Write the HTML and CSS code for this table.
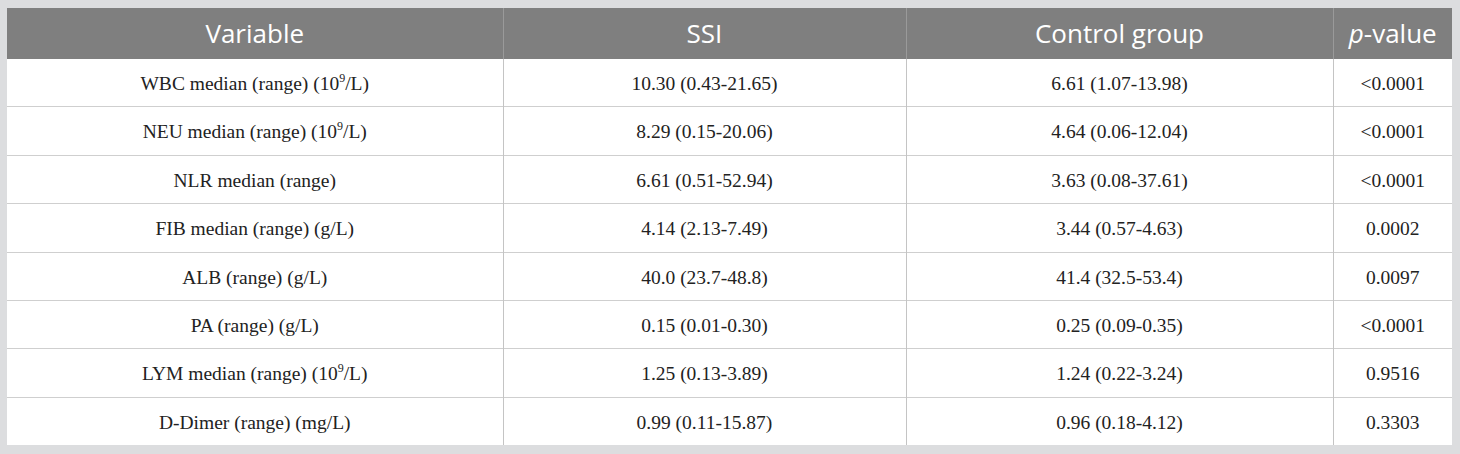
FILE: index.html
```html
<!DOCTYPE html>
<html>
<head>
<meta charset="utf-8">
<link rel="stylesheet" href="styles.css">
</head>
<body>
<table class="data">
  <colgroup>
    <col class="c1"><col class="c2"><col class="c3"><col class="c4">
  </colgroup>
  <thead>
    <tr><th>Variable</th><th>SSI</th><th>Control group</th><th><i>p</i>-value</th></tr>
  </thead>
  <tbody>
    <tr><td>WBC median (range) (10<sup>9</sup>/L)</td><td>10.30 (0.43-21.65)</td><td>6.61 (1.07-13.98)</td><td>&lt;0.0001</td></tr>
    <tr><td>NEU median (range) (10<sup>9</sup>/L)</td><td>8.29 (0.15-20.06)</td><td>4.64 (0.06-12.04)</td><td>&lt;0.0001</td></tr>
    <tr><td>NLR median (range)</td><td>6.61 (0.51-52.94)</td><td>3.63 (0.08-37.61)</td><td>&lt;0.0001</td></tr>
    <tr><td>FIB median (range) (g/L)</td><td>4.14 (2.13-7.49)</td><td>3.44 (0.57-4.63)</td><td>0.0002</td></tr>
    <tr><td>ALB (range) (g/L)</td><td>40.0 (23.7-48.8)</td><td>41.4 (32.5-53.4)</td><td>0.0097</td></tr>
    <tr><td>PA (range) (g/L)</td><td>0.15 (0.01-0.30)</td><td>0.25 (0.09-0.35)</td><td>&lt;0.0001</td></tr>
    <tr><td>LYM median (range) (10<sup>9</sup>/L)</td><td>1.25 (0.13-3.89)</td><td>1.24 (0.22-3.24)</td><td>0.9516</td></tr>
    <tr><td>D-Dimer (range) (mg/L)</td><td>0.99 (0.11-15.87)</td><td>0.96 (0.18-4.12)</td><td>0.3303</td></tr>
  </tbody>
</table>
</body>
</html>
```

FILE: styles.css
```css
html, body {
  margin: 0;
  padding: 0;
  background: #dcdddf;
}
body {
  padding: 8px 8px 8px 7px;
}
.data {
  width: 1445px;
  border-collapse: collapse;
  table-layout: fixed;
  background: #ffffff;
}
.c1 { width: 496px; }
.c2 { width: 403px; }
.c3 { width: 427px; }
.c4 { width: 119px; }
.data th {
  background: #7f7f7f;
  color: #ffffff;
  font-family: "Open Sans", "Noto Sans", sans-serif;
  font-weight: 400;
  font-size: 26px;
  line-height: 1;
  height: 49px;
  padding: 0 0 2px;
  text-align: center;
  border-left: 1px solid #9a9a9a;
}
.data th:first-child { border-left: none; }
.data td {
  font-family: "Liberation Serif", "Times New Roman", serif;
  font-size: 19.5px;
  line-height: 1;
  color: #222222;
  text-align: center;
  height: 45.4px;
  padding: 2px 0 0;
  border-top: 1px solid #cfcfcf;
  border-left: 1px solid #c4c4c4;
}
.data td:first-child { border-left: none; }
.data tbody tr:first-child td { border-top: none; }
.data sup {
  font-size: 12px;
  vertical-align: 8px;
  line-height: 0;
}
```
